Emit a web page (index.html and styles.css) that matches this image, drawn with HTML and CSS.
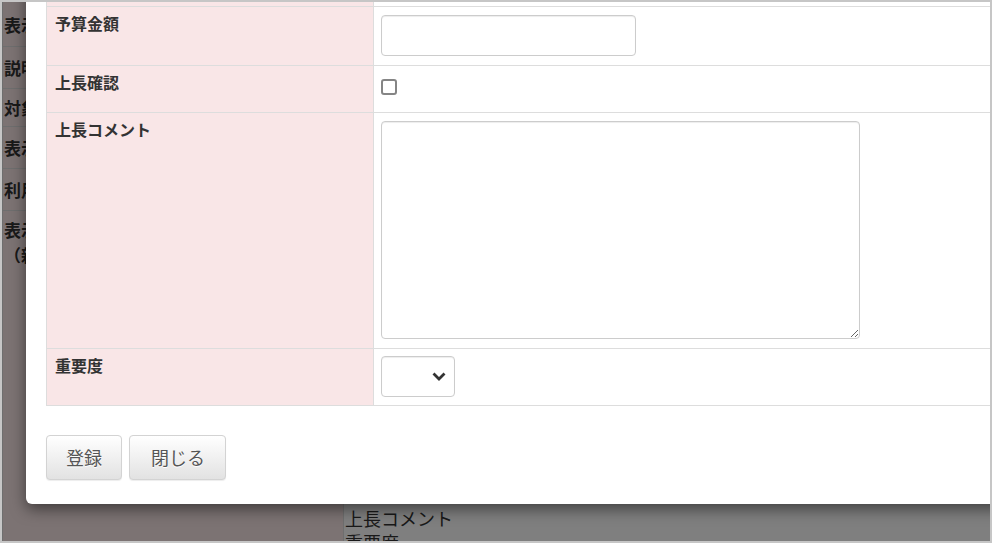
FILE: index.html
```html
<!DOCTYPE html>
<html lang="ja">
<head>
  <meta charset="UTF-8" />
  <meta name="viewport" content="width=device-width, initial-scale=1.0"/>
  <title>項目の編集</title>
  <link rel="stylesheet" href="styles.css">
</head>
<body>

  <div class="screen">

    <!-- page behind the dialog -->
    <div class="page">
      <table class="list">
        <tr class="row-a"><th>表示名</th><td></td></tr>
        <tr class="row-b"><th>説明</th><td></td></tr>
        <tr class="row-c"><th>対象者</th><td></td></tr>
        <tr class="row-b"><th>表示順</th><td></td></tr>
        <tr class="row-b"><th>利用者</th><td></td></tr>
        <tr class="row-last">
          <th>表示<br>（新規）</th>
          <td>
            <div class="field-list">
              <div>件名</div>
              <div>申請者</div>
              <div>申請日</div>
              <div>所属</div>
              <div>内容</div>
              <div>開始日</div>
              <div>終了日</div>
              <div>場所</div>
              <div>費用</div>
              <div>備考</div>
              <div>予算金額</div>
              <div>上長確認</div>
              <div>上長コメント</div>
              <div>重要度</div>
            </div>
          </td>
        </tr>
      </table>
    </div>

    <div class="overlay"></div>

    <div class="modal">
      <div class="modal-body">
        <table class="form">
          <tr class="prev-row"><th></th><td><div class="spacer"></div></td></tr>
          <tr>
            <th>予算金額</th>
            <td><input type="text" class="text-input"></td>
          </tr>
          <tr>
            <th>上長確認</th>
            <td><input type="checkbox" class="check"></td>
          </tr>
          <tr>
            <th>上長コメント</th>
            <td><textarea class="comment"></textarea></td>
          </tr>
          <tr class="select-row">
            <th>重要度</th>
            <td>
              <span class="select-wrap">
                <select class="select"><option></option></select>
                <svg class="chevron" width="14" height="9" viewBox="0 0 14 9">
                  <path d="M1.5 1.5 L7 7 L12.5 1.5" fill="none" stroke="#333" stroke-width="2.8"/>
                </svg>
              </span>
            </td>
          </tr>
        </table>
      </div>
      <div class="modal-footer">
        <button class="btn">登録</button>
        <button class="btn btn-wide">閉じる</button>
      </div>
    </div>

  </div>

</body>
</html>
```

FILE: styles.css
```css
body {
  margin: 0;
  font-family: "Noto Sans CJK JP", "Noto Sans", sans-serif;
  color: #333;
}

.screen {
  position: relative;
  width: 992px;
  height: 543px;
  box-sizing: border-box;
  border: 2px solid #c6c6c6;
  overflow: hidden;
  background-color: #fff;
}

/* background page */
.list {
  border-collapse: collapse;
  width: 1100px;
  table-layout: fixed;
  margin-top: -1px;
}

.list th,
.list td {
  border: 1px solid #ddd;
  padding: 0 7px 0 1px;
  text-align: left;
}

.list th {
  width: 332px;
  background-color: #f9e6e7;
  font-size: 17px;
  font-weight: bold;
  line-height: 25px;
  vertical-align: middle;
}

.list .row-a th { height: 44px; }
.list .row-b th { height: 41px; }
.list .row-c th { height: 37px; }

.list .row-last th,
.list .row-last td {
  vertical-align: top;
  padding-top: 6px;
}

.list .row-last th {
  padding-left: 1px;
}

.field-list {
  font-size: 18px;
  line-height: 24px;
  padding-top: 1px;
}

.overlay {
  position: absolute;
  inset: 0;
  background-color: rgba(0, 0, 0, 0.5);
}

/* dialog */
.modal {
  position: absolute;
  left: 24px;
  top: -50px;
  width: 1000px;
  background-color: #fff;
  border-radius: 6px;
  box-shadow: 0 5px 15px rgba(0, 0, 0, 0.5);
}

.modal-body {
  padding: 0 20px;
}

.form {
  border-collapse: collapse;
  table-layout: fixed;
  width: 100%;
}

.form th,
.form td {
  border: 1px solid #ddd;
  padding: 8px 7px 9px 7px;
  vertical-align: top;
  text-align: left;
}

.form th {
  width: 311px;
  background-color: #f9e6e7;
  font-size: 16px;
  font-weight: bold;
  line-height: 20px;
  color: #333;
  padding-top: 6px;
  padding-left: 8px;
}

.spacer {
  height: 36px;
}

.text-input,
.comment,
.select {
  display: block;
  box-sizing: border-box;
  margin: 0;
  border: 1px solid #ccc;
  border-radius: 4px;
  background-color: #fff;
  box-shadow: inset 0 1px 1px rgba(0, 0, 0, 0.075);
  font-family: inherit;
  font-size: 16px;
}

.text-input {
  width: 255px;
  height: 41px;
}

.check {
  display: block;
  appearance: none;
  width: 16px;
  height: 16px;
  margin: 5px 0 8px;
  box-sizing: border-box;
  border: 2px solid #858585;
  border-radius: 3px;
  background-color: #fff;
}

.comment {
  width: 479px;
  height: 218px;
  resize: both;
}

.select-row td {
  padding-top: 7px;
  padding-bottom: 8px;
}

.select-wrap {
  position: relative;
  display: block;
  width: 74px;
}

.select {
  appearance: none;
  width: 74px;
  height: 41px;
}

.chevron {
  position: absolute;
  left: 51px;
  top: 16px;
}

.modal-footer {
  display: flex;
  gap: 7px;
  padding: 29px 20px 24px;
}

.btn {
  font-family: inherit;
  font-size: 18px;
  line-height: 25px;
  padding: 9px 19px;
  color: #555;
  background-image: linear-gradient(to bottom, #fff 0, #e2e2e2 100%);
  border: 1px solid #d3d3d3;
  border-radius: 4px;
  text-shadow: 0 1px 0 #fff;
  box-shadow: inset 0 1px 0 rgba(255, 255, 255, 0.15), 0 1px 1px rgba(0, 0, 0, 0.075);
  cursor: pointer;
}

.btn-wide {
  padding: 9px 20px 9px 21px;
}
```
